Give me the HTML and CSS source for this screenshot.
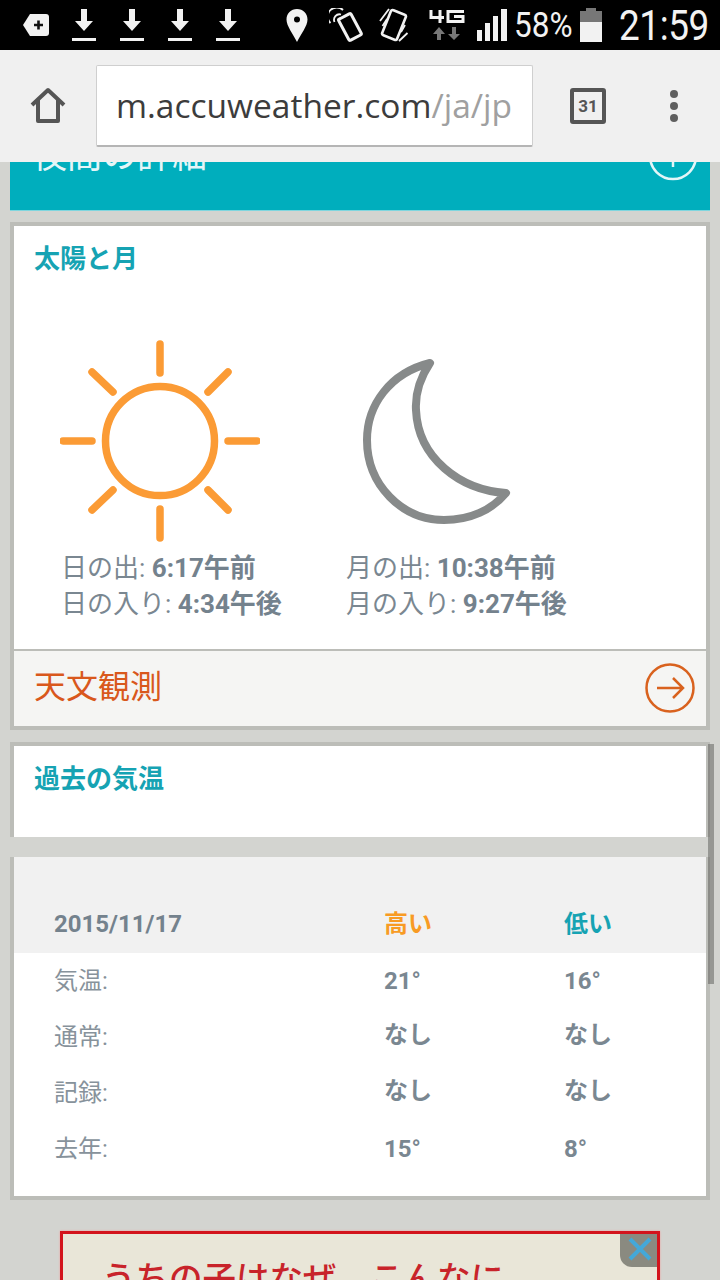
FILE: index.html
```html
<!DOCTYPE html>
<html lang="ja">
<head>
    <meta charset="UTF-8">
    <meta name="viewport" content="width=device-width, initial-scale=1.0">
    <title>太陽と月 - AccuWeather</title>
    <link rel="stylesheet" href="styles.css">
</head>
<body>
    <div class="statusbar">
        <svg class="ic-tag" width="26" height="22" viewBox="0 0 26 22"><path d="M7 0H23Q26 0 26 3V19Q26 22 23 22H7L0 11Z" fill="#f2f2f2"/><path d="M11 11H20M15.500 6.500V15.500" stroke="#111" stroke-width="2.600"/></svg>
        <svg class="ic-dl" width="24" height="32" viewBox="0 0 24 32"><path d="M9 0H15V12H21L12 22L3 12H9Z" fill="#f2f2f2"/><rect y="29" width="24" height="3" fill="#f2f2f2"/></svg>
        <svg class="ic-dl" width="24" height="32" viewBox="0 0 24 32"><path d="M9 0H15V12H21L12 22L3 12H9Z" fill="#f2f2f2"/><rect y="29" width="24" height="3" fill="#f2f2f2"/></svg>
        <svg class="ic-dl" width="24" height="32" viewBox="0 0 24 32"><path d="M9 0H15V12H21L12 22L3 12H9Z" fill="#f2f2f2"/><rect y="29" width="24" height="3" fill="#f2f2f2"/></svg>
        <svg class="ic-dl" width="24" height="32" viewBox="0 0 24 32"><path d="M9 0H15V12H21L12 22L3 12H9Z" fill="#f2f2f2"/><rect y="29" width="24" height="3" fill="#f2f2f2"/></svg>
        <svg class="ic-pin" width="22" height="33" viewBox="0 0 22 33"><path fill-rule="evenodd" d="M11 0C17 0 21.500 4.500 21.500 10.500C21.500 17 15 25 11 33C7 25 .5 17 .5 10.500C.5 4.500 5 0 11 0ZM11 7.500A3 3 0 1 0 11 13.500A3 3 0 1 0 11 7.500Z" fill="#f2f2f2"/></svg>
        <svg class="ic-nfc" width="36" height="34" viewBox="0 0 36 34" fill="none" stroke="#f2f2f2"><rect x="14" y="7" width="14" height="24" rx="1.500" transform="rotate(-28 21 19)" stroke-width="3"/><path d="M1.500 15A9 9 0 0 1 14 2M5.500 14A5.500 5.500 0 0 1 12 6.500M9 12.500A2 2 0 0 1 11 10.500" stroke-width="1.800"/></svg>
        <svg class="ic-vib" width="30" height="34" viewBox="0 0 30 34" fill="none" stroke="#f2f2f2"><rect x="7" y="3.500" width="16" height="27" rx="2" transform="rotate(22 15 17)" stroke-width="2.600"/><path d="M1 13L10 1M3.500 18L8 11M28.500 25L20 33M26 17L22 24" stroke-width="1.800"/></svg>
        <svg class="ic-4g" width="36" height="32" viewBox="0 0 36 32" fill="none" stroke="#f2f2f2" stroke-width="3"><path d="M2 1V8.500H15M11 1V14"/><path d="M35 2.500H19V12.500H34V7.500H25"/><path d="M10 18L16 25H12V31H8V25H4Z M23 18H27V25H31L25 31L19 25H23Z" fill="#777" stroke="none"/></svg>
        <svg class="ic-signal" width="30" height="32" viewBox="0 0 30 32"><path d="M0 21H5V32H0ZM8 14H13V32H8ZM16 7H21V32H16ZM24 0H30V32H24Z" fill="#f2f2f2"/></svg>
        <span class="battery-text">58%</span>
        <svg class="ic-batt" width="22" height="34" viewBox="0 0 22 34"><path d="M6 0H16V3H22V14H0V3H6Z" fill="#777"/><rect y="14" width="22" height="20" fill="#f2f2f2"/></svg>
        <span class="clock">21:59</span>
    </div>

    <div class="toolbar">
        <svg class="ic-home" width="38" height="38" viewBox="0 0 38 38" fill="none" stroke="#555" stroke-width="4" stroke-linejoin="round"><path d="M3 18L19 3L35 18"/><path d="M9 13V34H29V13"/></svg>
        <div class="urlbox"><span class="host">m.accuweather.com</span><span class="path">/ja/jp</span></div>
        <div class="tabs">31</div>
        <div class="menu"><i></i><i></i><i></i></div>
    </div>

    <div class="page">
        <div class="banner">
            <span>夜間の詳細</span>
            <svg class="ic-plus" width="50" height="50" viewBox="0 0 50 50" fill="none" stroke="#e4f6f8" stroke-width="2.500"><circle cx="25" cy="25" r="23"/><path d="M25 14V36M14 25H36"/></svg>
        </div>

        <section class="card sun-card">
            <h2 class="card-title">太陽と月</h2>
            <div class="astro">
                <div class="astro-col">
                    <svg class="ic-sun" width="200" height="202" viewBox="0 0 200 202" fill="none" stroke="#fb9b35" stroke-linecap="round" stroke-width="7.500">
                        <circle cx="100" cy="101" r="54.500"/>
                        <path d="M100 4V33M100 169V198M3 101H32M168 101H197M32 32L53 52M168 32L148 52M32 170L53 150M168 170L148 150"/>
                    </svg>
                    <p>日の出: <b>6:17午前</b></p>
                    <p>日の入り: <b>4:34午後</b></p>
                </div>
                <div class="astro-col">
                    <svg class="ic-moon" width="200" height="202" viewBox="0 0 200 202" fill="none" stroke="#878a8a" stroke-width="8" stroke-linejoin="round">
                        <path d="M70 23C30 33 7 65 7 100C7 145 42 180 84 180C110 180 132 170 146 153C100 150 58 118 56 70C55 53 60 38 70 23Z"/>
                    </svg>
                    <p>月の出: <b>10:38午前</b></p>
                    <p>月の入り: <b>9:27午後</b></p>
                </div>
            </div>
            <div class="astro-link">
                <span>天文観測</span>
                <svg width="50" height="50" viewBox="0 0 50 50" fill="none" stroke="#d9621e" stroke-width="2.500"><circle cx="25" cy="25" r="23.500"/><path d="M12 25H37M28 15L38 25L28 35"/></svg>
            </div>
        </section>

        <section class="card past-head">
            <h2 class="card-title">過去の気温</h2>
        </section>

        <section class="card past-table">
            <div class="row head">
                <span class="date">2015/11/17</span>
                <span class="high">高い</span>
                <span class="low">低い</span>
            </div>
            <div class="row"><span>気温:</span><b>21°</b><b>16°</b></div>
            <div class="row"><span>通常:</span><b class="na">なし</b><b class="na">なし</b></div>
            <div class="row"><span>記録:</span><b class="na">なし</b><b class="na">なし</b></div>
            <div class="row"><span>去年:</span><b>15°</b><b>8°</b></div>
        </section>

        <div class="ad">
            <p>うちの子はなぜ、こんなに</p>
            <div class="ad-close"><svg width="24" height="24" viewBox="0 0 24 24" stroke="#44a8d8" stroke-width="4"><path d="M2 2L22 22M22 2L2 22"/></svg></div>
        </div>

        <div class="scrollbar"></div>
    </div>
</body>
</html>
```

FILE: styles.css
```css
* {
    box-sizing: border-box;
}
html, body {
    margin: 0;
    padding: 0;
}
body {
    width: 720px;
    height: 1280px;
    overflow: hidden;
    font-family: Roboto, "Noto Sans CJK JP", sans-serif;
    background: #d3d4d0;
}

/* status bar */
.statusbar {
    height: 50px;
    background: #000;
    color: #f2f2f2;
    display: flex;
    align-items: center;
}
.statusbar svg {
    flex: none;
}
.ic-tag {
    margin-left: 23px;
}
.ic-dl {
    margin-left: 24px;
}
.ic-tag + .ic-dl {
    margin-left: 23px;
}
.ic-pin {
    margin-left: 46px;
}
.ic-nfc {
    margin-left: 21px;
}
.ic-vib {
    margin-left: 14px;
}
.ic-4g {
    margin-left: 20px;
}
.ic-signal {
    margin-left: 12px;
}
.battery-text {
    display: inline-block;
    margin-left: 7px;
    width: 66px;
    flex: none;
    font-size: 35px;
    white-space: nowrap;
    transform: scaleX(.9);
    transform-origin: left center;
}
.clock {
    display: inline-block;
    margin-left: 17px;
    flex: none;
    font-size: 42px;
    letter-spacing: -.5px;
    white-space: nowrap;
    transform: scaleX(.88);
    transform-origin: left center;
}

/* browser toolbar */
.toolbar {
    height: 112px;
    background: #f0f0f0;
    display: flex;
    align-items: center;
    position: relative;
    z-index: 2;
}
.ic-home {
    margin-left: 29px;
    flex: none;
}
.urlbox {
    margin-left: 29px;
    width: 437px;
    height: 82px;
    background: #fff;
    border: 1px solid #cfcfcf;
    border-bottom: 2px solid #b5b5b5;
    border-radius: 2px;
    padding-left: 19px;
    font-family: "Open Sans", sans-serif;
    font-size: 33.500px;
    line-height: 78px;
    white-space: nowrap;
    overflow: hidden;
}
.host {
    color: #3c3c3c;
}
.path {
    color: #a0a0a0;
}
.tabs {
    margin-left: 37px;
    width: 36px;
    height: 36px;
    border: 4px solid #555;
    border-radius: 3px;
    color: #555;
    font-size: 17px;
    font-weight: 700;
    line-height: 28px;
    text-align: center;
}
.menu {
    margin-left: 64px;
    display: flex;
    flex-direction: column;
    gap: 4px;
}
.menu i {
    width: 8px;
    height: 8px;
    border-radius: 50%;
    background: #5f5f5f;
}

/* page under the toolbar */
.page {
    position: relative;
    height: 1118px;
    overflow: hidden;
    padding: 0 10px;
}
.banner {
    height: 49px;
    background: #00aebd;
    border-bottom: 1px solid #7fd6de;
    display: flex;
    justify-content: space-between;
    color: #e4f6f8;
    font-size: 35px;
    line-height: 50px;
    padding: 0 12px 0 22px;
}
.banner span {
    margin-top: -30px;
}
.ic-plus {
    margin-top: -31px;
}
.card {
    background: #fff;
    border: 4px solid #bcbdb8;
}
.card-title {
    margin: 0;
    padding: 15px 0 0 20px;
    font-size: 26px;
    line-height: 36px;
    font-weight: 700;
    color: #16a3b3;
}
.sun-card {
    margin-top: 11px;
    height: 508px;
}
.astro {
    display: grid;
    grid-template-columns: 285px 1fr;
    padding: 63px 0 0 46px;
    height: 372px;
}
.astro-col p {
    margin: 0;
    padding-left: 1px;
    font-size: 26px;
    line-height: 36px;
    color: #7a8791;
    white-space: nowrap;
}
.astro-col b {
    font-weight: 700;
    color: #74828d;
}
.astro-col svg {
    display: block;
    margin-bottom: 8px;
}
.ic-moon {
    margin-left: 15px;
}
.astro-link {
    height: 77px;
    border-top: 2px solid #bcbdb8;
    background: #f5f5f3;
    display: flex;
    align-items: center;
    justify-content: space-between;
    padding: 0 11px 1px 20px;
    color: #d9581c;
    font-size: 32px;
    line-height: 40px;
}
.astro-link span {
    margin-bottom: 2px;
}
.past-head {
    margin-top: 12px;
    height: 95px;
    border-bottom: 0;
}
.past-table {
    margin-top: 20px;
    height: 343px;
    border-top: 0;
}
.row {
    height: 56px;
    display: grid;
    grid-template-columns: 330px 180px 1fr;
    align-items: center;
    padding-left: 40px;
    font-size: 24px;
    line-height: 28px;
    color: #87929b;
}
.row b {
    font-weight: 700;
    color: #7a8791;
}
.row b.na {
    margin-bottom: 4px;
}
.row.head {
    height: 96px;
    background: #f1f1f1;
    padding-top: 38px;
    font-weight: 700;
}
.date {
    color: #74828d;
}
.high {
    color: #f89b24;
}
.low {
    color: #16a3b3;
}

/* ad */
.ad {
    position: relative;
    margin: 31px 50px 0;
    height: 60px;
    background: #e9e6d8;
    border: 3px solid #d3141c;
    overflow: hidden;
    box-shadow: 0 0 2px #f2a0a0;
}
.ad p {
    margin: 0;
    padding-left: 39px;
    padding-top: 20px;
    font-size: 33.500px;
    font-weight: 500;
    line-height: 50px;
    color: #c8232a;
    white-space: nowrap;
}
.ad-close {
    position: absolute;
    top: -3px;
    right: -3px;
    width: 40px;
    height: 36px;
    background: #8a8a80;
    border-bottom-left-radius: 12px;
    display: flex;
    align-items: center;
    justify-content: center;
}
.scrollbar {
    position: absolute;
    left: 708px;
    top: 582px;
    width: 6px;
    height: 240px;
    background: rgba(90, 90, 85, .5);
}
```
